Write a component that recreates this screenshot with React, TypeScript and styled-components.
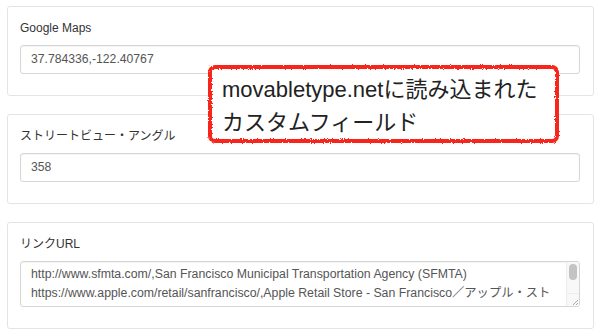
import React from "react";
import styled, { createGlobalStyle } from "styled-components";

const GlobalStyle = createGlobalStyle`
	html, body {
		margin: 0;
		padding: 0;
		background: #ffffff;
	}
	body {
		font-family: "Liberation Sans", "Noto Sans CJK JP", sans-serif;
		color: #333;
	}
`;

const Page = styled.div`
	position: relative;
	width: 600px;
	height: 335px;
	overflow: hidden;
	padding: 6px 6px 0 7px;
	box-sizing: border-box;
	display: flex;
	flex-direction: column;
	gap: 18px;
`;

const Card = styled.section`
	border: 1px solid #e4e4e4;
	border-radius: 3px;
	padding: 13px 13px 21px 12px;
	background: #fff;
`;

const Label = styled.div`
	font-size: 12px;
	line-height: 16px;
	color: #333;
	margin-bottom: 9px;
`;

const Input = styled.div`
	height: 29px;
	box-sizing: border-box;
	border: 1px solid #d6d6d6;
	border-radius: 3px;
	box-shadow: inset 0 1px 1px rgba(0, 0, 0, 0.05);
	padding: 0 10px;
	font-size: 12.2px;
	line-height: 27px;
	color: #555;
`;

const TextAreaWrap = styled.div`
	position: relative;
	height: 46px;
`;

const TextArea = styled.textarea`
	display: block;
	width: 100%;
	height: 100%;
	box-sizing: border-box;
	border: 1px solid #d6d6d6;
	border-radius: 3px;
	box-shadow: inset 0 1px 1px rgba(0, 0, 0, 0.05);
	padding: 3px 26px 0 10px;
	font-family: "Liberation Sans", "Noto Sans CJK JP", sans-serif;
	font-size: 12.3px;
	line-height: 19px;
	color: #555;
	resize: none;
	overflow: hidden;
	outline: none;
`;

// the browser hides native scrollbars, so the textarea's bar is drawn over it
const ScrollTrack = styled.div`
	position: absolute;
	top: 1px;
	right: 1px;
	bottom: 1px;
	width: 12px;
	background: #f8f8f8;
	border-left: 1px solid #ececec;
	border-radius: 0 2px 2px 0;
`;

const ScrollThumb = styled.div`
	position: absolute;
	top: 2px;
	left: 2px;
	width: 8px;
	height: 16px;
	border-radius: 4px;
	background: #c3c3c3;
`;

const Resizer = styled.div`
	position: absolute;
	left: 0;
	right: 0;
	bottom: 0;
	height: 12px;
	border-top: 1px solid #ececec;
	display: flex;
	align-items: flex-end;
	justify-content: flex-end;
`;

const Callout = styled.div`
	position: absolute;
	left: 208px;
	top: 65px;
	width: 351px;
	height: 78px;
	box-sizing: border-box;
	padding: 8px 10px 0 14px;
	background: #fff;
	font-family: "Liberation Sans", "Noto Sans CJK JP", sans-serif;
	font-size: 22px;
	line-height: 33px;
	color: #222;
	white-space: nowrap;

	&::before {
		content: "";
		position: absolute;
		inset: 0;
		border: 4px solid #f7271d;
		border-radius: 7px;
		filter: url(#rough);
		pointer-events: none;
	}
`;

const linkText =
	"http://www.sfmta.com/,San Francisco Municipal Transportation Agency (SFMTA)\n" +
	"https://www.apple.com/retail/sanfrancisco/,Apple Retail Store - San Francisco／アップル・ストア サンフランシスコ";

export default function App() {
	return (
		<>
			<GlobalStyle />
			<svg width="0" height="0" style={{ position: "absolute" }}>
				<defs>
					<filter id="rough">
						<feTurbulence type="fractalNoise" baseFrequency="0.9" numOctaves="2" result="noise" />
						<feDisplacementMap in="SourceGraphic" in2="noise" scale="3" />
					</filter>
				</defs>
			</svg>
			<Page>
				<Card>
					<Label>Google Maps</Label>
					<Input>37.784336,-122.40767</Input>
				</Card>
				<Card>
					<Label>ストリートビュー・アングル</Label>
					<Input>358</Input>
				</Card>
				<Card>
					<Label>リンクURL</Label>
					<TextAreaWrap>
						<TextArea defaultValue={linkText} />
						<ScrollTrack>
							<ScrollThumb />
							<Resizer>
								<svg width="8" height="8" viewBox="0 0 8 8">
									<path d="M7 2 L2 7 M7 5 L5 7" stroke="#999" strokeWidth="0.8" />
								</svg>
							</Resizer>
						</ScrollTrack>
					</TextAreaWrap>
				</Card>
				<Callout>
					movabletype.netに読み込まれた
					<br />
					カスタムフィールド
				</Callout>
			</Page>
		</>
	);
}
